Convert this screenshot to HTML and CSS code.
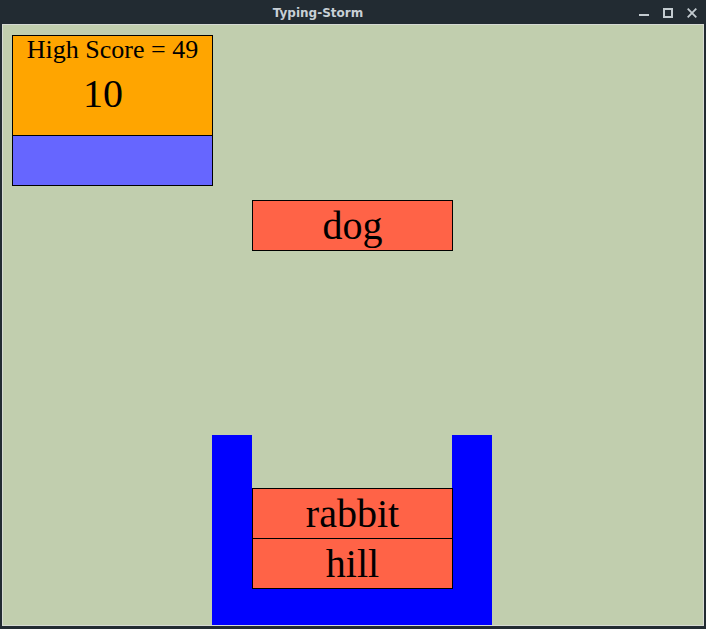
FILE: index.html
```html
<!DOCTYPE html>
<html>
<head>
<meta charset="utf-8">
<title>Typing-Storm</title>
<link rel="stylesheet" href="styles.css">
</head>
<body>
<div class="window">
  <div class="titlebar">
    <div class="title">Typing-Storm</div>
    <div class="controls">
      <svg class="ctl" width="10" height="10" viewBox="0 0 10 10"><rect x="0" y="6" width="10" height="2" fill="#c3cbd0"/></svg>
      <svg class="ctl" width="10" height="10" viewBox="0 0 10 10"><rect x="1" y="1" width="8" height="8" fill="none" stroke="#c3cbd0" stroke-width="2"/></svg>
      <svg class="ctl" width="10" height="10" viewBox="0 0 10 10"><path d="M0.7 0.7 L9.3 9.3 M9.3 0.7 L0.7 9.3" stroke="#c3cbd0" stroke-width="1.8"/></svg>
    </div>
  </div>
  <div class="frame">
    <div class="canvas">
      <div class="scoreboard">
        <div class="score-top">
          <div class="high">High Score = 49</div>
          <div class="score">10</div>
        </div>
        <div class="score-bottom"></div>
      </div>
      <div class="word falling" style="left:249px;top:175px">dog</div>
      <div class="bucket">
        <div class="wall"></div>
        <div class="inside">
          <div class="gap"></div>
          <div class="word">rabbit</div>
          <div class="word stacked">hill</div>
          <div class="fill"></div>
        </div>
        <div class="wall"></div>
      </div>
    </div>
  </div>
</div>
</body>
</html>
```
FILE: styles.css
```css
html, body {
  margin: 0;
  padding: 0;
  background: #222b32;
}
.window {
  width: 706px;
  height: 629px;
  background: #222b32;
  display: flex;
  flex-direction: column;
}
.titlebar {
  height: 24px;
  display: flex;
  align-items: center;
}
.title {
  width: 636px;
  text-align: center;
  font-family: "DejaVu Sans", sans-serif;
  font-weight: bold;
  font-size: 12px;
  color: #c8d0d6;
  padding-top: 1px;
}
.controls {
  display: flex;
  gap: 14px;
  margin-left: 3px;
  padding-top: 2px;
}
.ctl {
  display: block;
}
.frame {
  margin: 0 2px;
  border: 1px solid #d6dad3;
  width: 700px;
  height: 600px;
}
.canvas {
  position: relative;
  width: 700px;
  height: 600px;
  overflow: hidden;
  background: #c1ceae;
  font-family: "Liberation Serif", "Times New Roman", serif;
  color: #000;
}
.scoreboard {
  position: absolute;
  left: 9px;
  top: 10px;
  width: 199px;
  border: 1px solid #000;
}
.score-top {
  height: 99px;
  background: #ffa500;
  border-bottom: 1px solid #000;
  display: flex;
  flex-direction: column;
}
.high {
  font-size: 26px;
  text-align: center;
  line-height: 29px;
  margin-top: -1px;
}
.score {
  font-size: 40px;
  line-height: 44px;
  margin-top: 8px;
  padding-left: 70px;
}
.score-bottom {
  height: 49px;
  background: #6666ff;
}
.word {
  width: 199px;
  height: 49px;
  border: 1px solid #000;
  background: #ff6347;
  font-size: 40px;
  text-align: center;
  line-height: 49px;
  flex: none;
}
.falling {
  position: absolute;
}
.bucket {
  position: absolute;
  left: 209px;
  top: 410px;
  width: 280px;
  height: 190px;
  display: flex;
}
.wall {
  width: 40px;
  background: #0000ff;
}
.inside {
  width: 200px;
  display: flex;
  flex-direction: column;
  position: relative;
  z-index: 1;
}
.gap {
  height: 53px;
  flex: none;
}
.stacked {
  margin-top: -1px;
}
.fill {
  flex: 1;
  background: #0000ff;
}
```
